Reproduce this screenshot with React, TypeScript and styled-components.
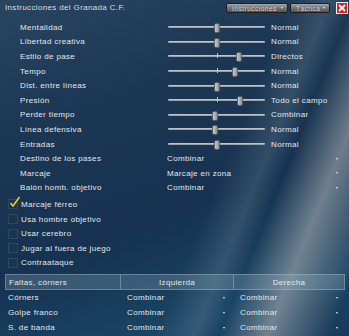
import React from "react";
import styled, { createGlobalStyle } from "styled-components";

const GlobalStyle = createGlobalStyle`
  html, body {
    margin: 0;
    padding: 0;
    background: #0f2238;
  }
  body {
    font-family: "Liberation Sans", Arial, sans-serif;
  }
`;

const sliders = [
  { label: "Mentalidad", pos: 48, value: "Normal" },
  { label: "Libertad creativa", pos: 48, value: "Normal" },
  { label: "Estilo de pase", pos: 70, value: "Directos", tick: true },
  { label: "Tempo", pos: 66, value: "Normal", tick: true },
  { label: "Dist. entre líneas", pos: 48, value: "Normal" },
  { label: "Presión", pos: 71, value: "Todo el campo", tick: true },
  { label: "Perder tiempo", pos: 46, value: "Combinar" },
  { label: "Línea defensiva", pos: 46, value: "Normal" },
  { label: "Entradas", pos: 48, value: "Normal" },
];

const selects = [
  { label: "Destino de los pases", value: "Combinar" },
  { label: "Marcaje", value: "Marcaje en zona" },
  { label: "Balón homb. objetivo", value: "Combinar" },
];

const checks = [
  { label: "Marcaje férreo", checked: true },
  { label: "Usa hombre objetivo", checked: false },
  { label: "Usar cerebro", checked: false },
  { label: "Jugar al fuera de juego", checked: false },
  { label: "Contraataque", checked: false },
];

const setPieces = ["Córners", "Golpe franco", "S. de banda"];

const App: React.FC = () => {
  return (
    <>
      <GlobalStyle />
      <Window>
        <TitleBar>
          <Title>Instrucciones del Granada C.F.</Title>
          <MenuButton width={62}>
            Instrucciones <Caret />
          </MenuButton>
          <MenuButton width={40}>
            Táctica <Caret />
          </MenuButton>
          <CloseButton>
            <svg width="8" height="8" viewBox="0 0 8 8">
              <path d="M1 1 L7 7 M7 1 L1 7" stroke="#fff" strokeWidth="1.8" />
            </svg>
          </CloseButton>
        </TitleBar>

        <Section>
          {sliders.map((s) => (
            <SliderRow key={s.label}>
              <Label>{s.label}</Label>
              <Track>
                {s.tick && <Tick />}
                <Thumb style={{ left: s.pos - 2 }} />
              </Track>
              <Value>{s.value}</Value>
            </SliderRow>
          ))}
          {selects.map((s) => (
            <SelectRow key={s.label}>
              <Label>{s.label}</Label>
              <Value>{s.value}</Value>
              <Arrow />
            </SelectRow>
          ))}
        </Section>

        <CheckList>
          {checks.map((c) => (
            <CheckRow key={c.label}>
              <Box>
                {c.checked && (
                  <svg width="12" height="12" viewBox="0 0 12 12">
                    <path
                      d="M1.5 7 L4 10 L10.5 1"
                      stroke="#e8d21a"
                      strokeWidth="1.6"
                      fill="none"
                    />
                  </svg>
                )}
              </Box>
              <CheckLabel>{c.label}</CheckLabel>
            </CheckRow>
          ))}
        </CheckList>

        <Table>
          <HeaderRow>
            <HeadCell align="left">Faltas, córners</HeadCell>
            <HeadCell>Izquierda</HeadCell>
            <HeadCell>Derecha</HeadCell>
          </HeaderRow>
          {setPieces.map((p) => (
            <TableRow key={p}>
              <Cell>{p}</Cell>
              <SelectCell>
                <span>Combinar</span>
                <Arrow />
              </SelectCell>
              <SelectCell>
                <span>Combinar</span>
                <Arrow />
              </SelectCell>
            </TableRow>
          ))}
        </Table>
      </Window>
    </>
  );
};

const Window = styled.div`
  width: 349px;
  height: 336px;
  overflow: hidden;
  color: #e3e8ec;
  font-size: 8px;
  letter-spacing: 0.35px;
  background:
    linear-gradient(
      112deg,
      rgba(255, 255, 255, 0) 60%,
      rgba(150, 170, 185, 0.22) 68%,
      rgba(255, 255, 255, 0) 73%,
      rgba(170, 175, 180, 0.6) 83%,
      rgba(130, 140, 150, 0.45) 89%,
      rgba(255, 255, 255, 0) 96%
    ),
    linear-gradient(
      160deg,
      #2a4560 0%,
      #1b3753 30%,
      #163250 60%,
      #1a4565 85%,
      #183a5a 100%
    );
`;

const TitleBar = styled.div`
  height: 20px;
  display: flex;
  align-items: center;
  padding: 0 1px 0 5px;
  gap: 2px;
`;

const Title = styled.div`
  flex: 1;
  margin-top: -6px;
  color: #d8dfe5;
`;

const MenuButton = styled.div<{ width: number }>`
  box-sizing: border-box;
  width: ${(p) => p.width}px;
  height: 10px;
  display: flex;
  align-items: center;
  justify-content: space-between;
  padding: 0 4px 0 5px;
  margin-top: -4px;
  border: 1px solid #1e1e1e;
  border-radius: 2px;
  font-size: 6.5px;
  letter-spacing: 0.5px;
  color: #e4e4e4;
  text-shadow: 0 0 1px #222;
  background: linear-gradient(#a8a8a8, #747474 50%, #545454);
`;

const Caret = styled.span`
  width: 0;
  height: 0;
  border-left: 1.5px solid transparent;
  border-right: 1.5px solid transparent;
  border-top: 2px solid #eee;
`;

const CloseButton = styled.div`
  width: 10px;
  height: 10px;
  margin: -4px 0 0 4px;
  display: flex;
  align-items: center;
  justify-content: center;
  background: #d42626;
  border: 1px solid #f0f0f0;
`;

const Section = styled.div`
  display: flex;
  flex-direction: column;
`;

const SliderRow = styled.div`
  height: 14.6px;
  display: grid;
  grid-template-columns: 142px 97px 1fr;
  column-gap: 6px;
  align-items: center;
  padding-left: 20px;
`;

const SelectRow = styled.div`
  height: 14.6px;
  display: grid;
  grid-template-columns: 147px 1fr 10px;
  align-items: center;
  padding: 0 7px 0 20px;
`;

const Label = styled.span`
  white-space: nowrap;
`;

const Value = styled.span`
  white-space: nowrap;
`;

const Track = styled.div`
  position: relative;
  height: 2px;
  background: linear-gradient(#d0d4d8, #8a9096);
  border-radius: 1px;
`;

const Tick = styled.div`
  position: absolute;
  left: 49px;
  top: -2px;
  width: 1px;
  height: 5px;
  background: #c0c4c8;
`;

const Thumb = styled.div`
  position: absolute;
  top: -3px;
  width: 4px;
  height: 8px;
  border-radius: 2px;
  background: linear-gradient(90deg, #c8cbce, #8e9296);
  border: 0.5px solid #5a5f64;
`;

const Arrow = styled.span`
  justify-self: center;
  width: 0;
  height: 0;
  border-left: 1.5px solid transparent;
  border-right: 1.5px solid transparent;
  border-top: 2.5px solid #e8ecef;
`;

const CheckList = styled.div`
  display: flex;
  flex-direction: column;
  padding: 2px 0 0 8px;
`;

const CheckRow = styled.div`
  height: 14.6px;
  display: flex;
  align-items: center;
  gap: 3px;
`;

const Box = styled.div`
  position: relative;
  width: 8px;
  height: 8px;
  background: #1b344c;
  border: 0.5px solid #2b4a66;
  svg {
    position: absolute;
    left: 0;
    top: -4px;
  }
`;

const CheckLabel = styled.span`
  white-space: nowrap;
`;

const Table = styled.div`
  margin: 4px 4px 0 5px;
`;

const HeaderRow = styled.div`
  height: 14px;
  display: grid;
  grid-template-columns: 114px 113px 1fr;
  background: rgba(150, 180, 190, 0.28);
  border: 1px solid rgba(170, 195, 205, 0.4);
`;

const HeadCell = styled.div<{ align?: string }>`
  display: flex;
  align-items: center;
  justify-content: ${(p) => (p.align === "left" ? "flex-start" : "center")};
  padding-left: ${(p) => (p.align === "left" ? "3px" : "0")};
  border-left: ${(p) =>
    p.align === "left" ? "none" : "1px solid rgba(170, 195, 205, 0.45)"};
`;

const TableRow = styled.div`
  height: 15px;
  display: grid;
  grid-template-columns: 114px 113px 1fr;
  align-items: center;
`;

const Cell = styled.div`
  padding-left: 3px;
`;

const SelectCell = styled.div`
  display: flex;
  align-items: center;
  justify-content: space-between;
  padding: 0 7px 0 8px;
`;

export default App;
